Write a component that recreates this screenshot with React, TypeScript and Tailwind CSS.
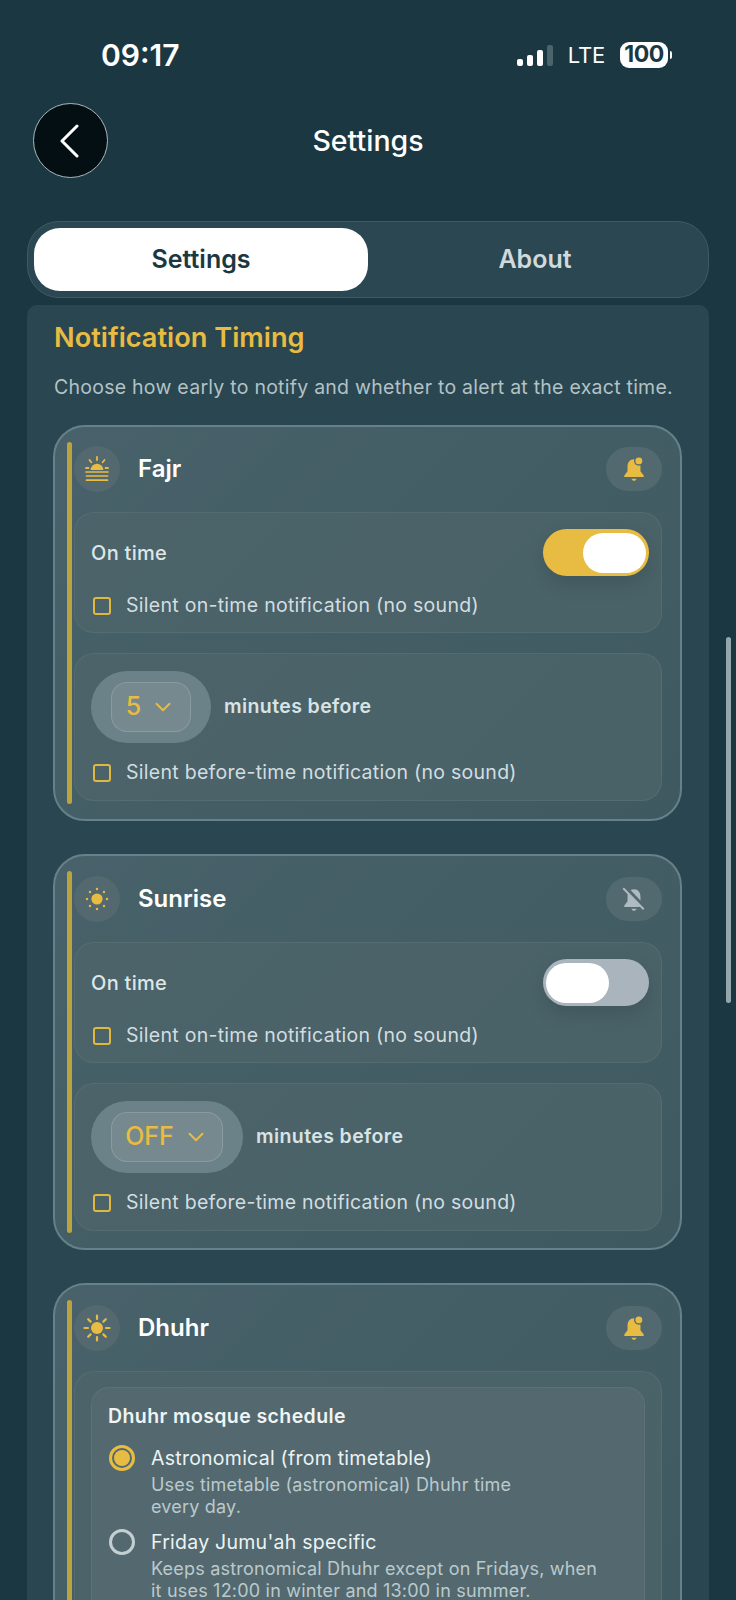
import type { ReactNode } from "react";
import { ChevronDown } from "lucide-react";

const BellOn = () => (
  <svg width="28" height="28" viewBox="0 0 26 26">
    <path d="M13 4c-4 0-6 3-6 7v4l-3 4v1.500h18V19l-3-4v-4c0-4-2-7-6-7z" fill="#e8bc42" />
    <path d="M10.500 22h5l-1.500 2h-2z" fill="#e8bc42" />
    <circle cx="17.500" cy="5.500" r="4.500" fill="#51696f" />
    <circle cx="17.500" cy="5.500" r="3.200" fill="#e8bc42" />
  </svg>
);

const BellOff = () => (
  <svg width="28" height="28" viewBox="0 0 26 26">
    <path d="M13 4c-4 0-6 3-6 7v4l-3 4v1.500h18V19l-3-4v-4c0-4-2-7-6-7z" fill="#aebbc0" />
    <path d="M10.500 22h5l-1.500 2h-2z" fill="#aebbc0" />
    <path d="M5 2.500l18 19" stroke="#51696f" strokeWidth="4" />
    <path d="M3 3l19 19.500" stroke="#aebbc0" strokeWidth="1.800" />
  </svg>
);

const FajrIcon = () => (
  <svg width="24" height="26" viewBox="0 0 24 26" fill="none" stroke="#e8bc42" strokeLinecap="round">
    <path d="M5.700 14a6.300 6.300 0 0 1 12.600 0z" fill="#e8bc42" stroke="none" />
    <path d="M12 1v3M4.500 4l1.800 2.200M19.500 4l-1.800 2.200M1 12h2.500M20.500 12H23" strokeWidth="1.800" />
    <path d="M1 16h22M1.500 20h21M1.500 24.200h21" strokeWidth="1.700" />
  </svg>
);

const SunriseIcon = () => (
  <svg width="24" height="24" viewBox="0 0 24 24" fill="#e8bc42">
    <circle cx="12" cy="12" r="5.600" />
    <circle cx="12" cy="2" r="1.200" />
    <circle cx="12" cy="22" r="1.200" />
    <circle cx="2" cy="12" r="1.200" />
    <circle cx="22" cy="12" r="1.200" />
    <circle cx="5" cy="5" r="1.200" />
    <circle cx="19" cy="5" r="1.200" />
    <circle cx="5" cy="19" r="1.200" />
    <circle cx="19" cy="19" r="1.200" />
  </svg>
);

const SunIcon = () => (
  <svg width="28" height="28" viewBox="0 0 28 28" fill="none" stroke="#e8bc42" strokeWidth="2.200" strokeLinecap="round">
    <circle cx="14" cy="14" r="6" fill="#e8bc42" stroke="none" />
    <path d="M14 1.500v3.500M14 23v3.500M1.500 14H5M23 14h3.500M5.200 5.200l2.400 2.400M20.400 20.400l2.400 2.400M5.200 22.800l2.400-2.400M20.400 7.600l2.400-2.400" />
  </svg>
);

function Checkbox({ label }: { label: string }) {
  return (
    <div className="flex items-center ml-[2px] h-[18px]">
      <span className="size-[18px] shrink-0 rounded-[3px] border-2 border-[#e0b840]" />
      <span className="ml-[15px] text-[19.500px] tracking-[0.28px] leading-none text-[#d3dde0] whitespace-nowrap">{label}</span>
    </div>
  );
}

function Toggle({ on }: { on: boolean }) {
  return (
    <div
      className={
        on
          ? "w-[106px] h-[47px] rounded-full bg-[#e8bc42] flex items-center justify-end pr-[3px] shadow-[0_8px_20px_rgba(0,0,0,0.12)]"
          : "w-[106px] h-[47px] rounded-full bg-[#a9b4bc] flex items-center pl-[3px] shadow-[0_8px_20px_rgba(0,0,0,0.12)]"
      }
    >
      <span className="w-[63px] h-[40px] rounded-full bg-white" />
    </div>
  );
}

function Panel({ className, children }: { className: string; children: ReactNode }) {
  return (
    <div className={"rounded-[20px] border border-white/[0.06] bg-[linear-gradient(135deg,#4b6369,#496268)] " + className}>
      {children}
    </div>
  );
}

function MinutesSelect({ value, wide }: { value: string; wide?: boolean }) {
  return (
    <div className="flex items-center">
      <div
        className={
          wide
            ? "w-[152px] h-[72px] rounded-[36px] bg-[#6c8289] flex items-center justify-center"
            : "w-[120px] h-[72px] rounded-[36px] bg-[#6c8289] flex items-center justify-center"
        }
      >
        <div
          className={
            wide
              ? "w-[112px] h-[50px] rounded-[16px] border border-white/15 bg-[#76898f] flex items-center justify-center gap-[9px]"
              : "w-[80px] h-[50px] rounded-[16px] border border-white/15 bg-[#76898f] flex items-center justify-center gap-[9px]"
          }
        >
          <span className="text-[25px] font-medium text-[#e8bc42]">{value}</span>
          <ChevronDown size={26} color="#e8bc42" strokeWidth={1.800} />
        </div>
      </div>
      <span className="ml-[13px] text-[19.500px] tracking-[0.4px] font-semibold text-[#d9e3e6] whitespace-nowrap">minutes before</span>
    </div>
  );
}

function PrayerHeader({ name, icon, bell }: { name: string; icon: ReactNode; bell: ReactNode }) {
  return (
    <div className="flex items-center justify-between h-[46px]">
      <div className="flex items-center">
        <div className="size-[46px] rounded-full bg-[#53696f] flex items-center justify-center">{icon}</div>
        <span className="ml-[18px] text-[24px] font-semibold text-white">{name}</span>
      </div>
      <div className="w-[56px] h-[44px] rounded-[22px] bg-[#51696f] flex items-center justify-center">{bell}</div>
    </div>
  );
}

function PrayerCard({ children, clip, nudge }: { children: ReactNode; clip?: boolean; nudge?: boolean }) {
  return (
    <div
      className={
        clip
          ? "mt-[33px] flex gap-[2px] rounded-t-[32px] border-2 border-b-0 border-[#67818a] bg-[linear-gradient(135deg,#48616a,#3e5a60)] pl-[12px] pr-[18px] pt-[15px]"
          : "mt-[33px] flex gap-[2px] rounded-[32px] border-2 border-[#67818a] bg-[linear-gradient(135deg,#48616a,#3e5a60)] pl-[12px] pr-[18px] py-[15px]"
      }
    >
      <div className="w-[5px] rounded-full bg-[#bda33e] shrink-0" />
      <div className={nudge ? "flex-1 pt-[5px] pb-[2px]" : "flex-1 pt-[4px] pb-[3px]"}>{children}</div>
    </div>
  );
}

function TimingCard({
  name,
  icon,
  bell,
  on,
  value,
  wide,
  nudge,
}: {
  name: string;
  icon: ReactNode;
  bell: ReactNode;
  on: boolean;
  value: string;
  wide?: boolean;
  nudge?: boolean;
}) {
  return (
    <PrayerCard nudge={nudge}>
      <PrayerHeader name={name} icon={icon} bell={bell} />
      <Panel className="mt-[20px] h-[121px] pl-[16px] pr-[12px] pt-[16px]">
        <div className="flex items-center justify-between h-[47px]">
          <span className="text-[20px] tracking-[0.3px] font-medium text-[#dde6e8]">On time</span>
          <Toggle on={on} />
        </div>
        <div className="mt-[21px]">
          <Checkbox label="Silent on-time notification (no sound)" />
        </div>
      </Panel>
      <Panel className="mt-[20px] h-[148px] pl-[16px] pt-[17px]">
        <MinutesSelect value={value} wide={wide} />
        <div className="mt-[21px]">
          <Checkbox label="Silent before-time notification (no sound)" />
        </div>
      </Panel>
    </PrayerCard>
  );
}

function RadioOption({ selected, title, lines }: { selected: boolean; title: string; lines: string[] }) {
  return (
    <div className="flex">
      {selected ? (
        <span className="mt-[1px] size-[26px] shrink-0 rounded-full border-[3px] border-[#e8bc42] p-[2px]">
          <span className="block size-full rounded-full bg-[#e8bc42]" />
        </span>
      ) : (
        <span className="mt-[1px] size-[26px] shrink-0 rounded-full border-[3px] border-[#c4cfd2]" />
      )}
      <div className="ml-[16px]">
        <div className="text-[19.500px] tracking-[0.25px] leading-[28px] text-[#edf2f3] whitespace-nowrap">{title}</div>
        <div className="mt-[2px] text-[18px] tracking-[0.2px] leading-[22px] text-[#bcc9cc] whitespace-nowrap">
          {lines.map((l) => (
            <div key={l}>{l}</div>
          ))}
        </div>
      </div>
    </div>
  );
}

export default function App() {
  return (
    <div className="relative w-[736px] h-[1600px] overflow-hidden bg-[#1b3842] font-['Inter',sans-serif]">
      {/* status bar */}
      <div className="h-[103px] flex items-start justify-between pt-[38px] pl-[101px] pr-[64px]">
        <span className="text-[30px] leading-[34px] font-semibold text-white">09:17</span>
        <div className="flex items-center h-[34px] -mt-[1px] pt-[1px]">
          <svg width="36" height="22" viewBox="0 0 36 22">
            <rect x="0" y="15" width="6" height="7" rx="2" fill="#fff" />
            <rect x="10" y="11" width="6" height="11" rx="2" fill="#fff" />
            <rect x="20" y="6" width="6" height="16" rx="2" fill="#fff" />
            <rect x="30" y="1" width="6" height="21" rx="2" fill="#4c636c" />
          </svg>
          <span className="ml-[15px] text-[22px] tracking-[-0.2px] leading-none font-normal text-white">LTE</span>
          <div className="ml-[15px] flex items-center">
            <span className="w-[48px] h-[26px] rounded-[9px] bg-white flex items-center justify-center text-[23px] tracking-[-0.5px] leading-none font-bold text-[#1b3842]">
              100
            </span>
            <span className="ml-[2px] w-[2px] h-[8px] rounded-r-full bg-white" />
          </div>
        </div>
      </div>

      {/* header */}
      <div className="grid grid-cols-[1fr_auto_1fr] items-center h-[75px]">
        <div className="ml-[33px] size-[75px] rounded-full bg-[#030f13] border border-[#a9b8bc] flex items-center justify-center">
          <svg className="-ml-[4px]" width="24" height="34" viewBox="0 0 24 34" fill="none" stroke="#fff" strokeWidth="3" strokeLinecap="round" strokeLinejoin="round">
            <path d="M20 2L5 17l15 15" />
          </svg>
        </div>
        <span className="text-[28.500px] mt-[2px] font-medium text-white">Settings</span>
        <div />
      </div>

      {/* tabs */}
      <div className="mt-[43px] mx-[27px] h-[77px] rounded-[32px] border border-[#3f5a63] bg-[#2b4751] p-[6px] flex">
        <div className="w-[334px] rounded-[26px] bg-white flex items-center justify-center text-[25px] font-semibold text-[#1b3842]">
          Settings
        </div>
        <div className="flex-1 flex items-center justify-center text-[25px] font-semibold text-[#d0dadc]">About</div>
      </div>

      {/* notification timing */}
      <div className="mt-[7px] mx-[27px] h-[1295px] rounded-t-[10px] bg-[#2a4650] pl-[26px] pr-[27px] pt-[16px]">
        <h2 className="ml-[1px] text-[27.200px] leading-[34px] font-semibold text-[#e8bc42]">Notification Timing</h2>
        <p className="ml-[1px] mt-[19px] text-[19.500px] leading-[26px] tracking-[0.25px] text-[#b2c2c6] whitespace-nowrap">
          Choose how early to notify and whether to alert at the exact time.
        </p>
        <div className="-mt-[8px]">
          <TimingCard name="Fajr" icon={<FajrIcon />} bell={<BellOn />} on value="5" />
          <TimingCard name="Sunrise" icon={<SunriseIcon />} bell={<BellOff />} on={false} value="OFF" wide nudge />
          <div className="mt-px">
            <PrayerCard clip nudge>
              <PrayerHeader name="Dhuhr" icon={<SunIcon />} bell={<BellOn />} />
              <Panel className="mt-[20px] h-[300px] px-[16px] pt-[15px]">
                <div className="h-[280px] rounded-[18px] border border-white/[0.06] bg-[#53696f] pl-[16px] pt-[15px]">
                  <div className="text-[19.500px] tracking-[0.4px] leading-[26px] font-semibold text-[#f0f4f5]">Dhuhr mosque schedule</div>
                  <div className="ml-[1px] mt-[15px] flex flex-col gap-[10px]">
                    <RadioOption
                      selected
                      title="Astronomical (from timetable)"
                      lines={["Uses timetable (astronomical) Dhuhr time", "every day."]}
                    />
                    <RadioOption
                      selected={false}
                      title="Friday Jumu'ah specific"
                      lines={["Keeps astronomical Dhuhr except on Fridays, when", "it uses 12:00 in winter and 13:00 in summer."]}
                    />
                  </div>
                </div>
              </Panel>
            </PrayerCard>
          </div>
        </div>
      </div>

      {/* scroll indicator */}
      <div className="absolute left-[726px] top-[637px] w-[5px] h-[366px] rounded-full bg-[#94a7ac]" />
    </div>
  );
}
